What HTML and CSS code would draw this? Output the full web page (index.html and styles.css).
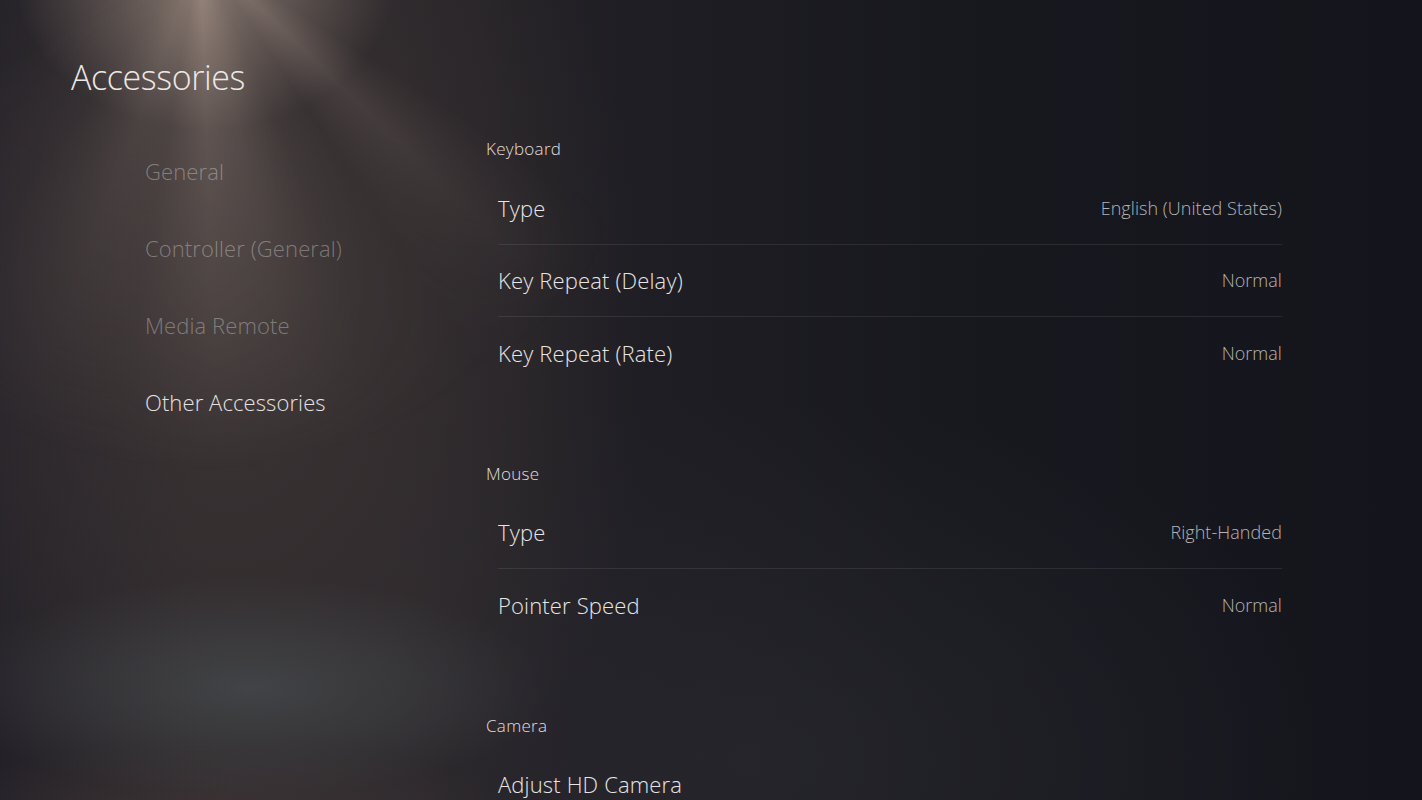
FILE: index.html
```html
<!DOCTYPE html>
<html lang="en">
<head>
<meta charset="utf-8">
<title>Accessories</title>
<link rel="stylesheet" href="styles.css">
</head>
<body>
<div class="screen">
  <div class="rays"></div>
  <aside class="sidebar">
    <h1 class="title">Accessories</h1>
    <nav class="nav">
      <div class="nav-item">General</div>
      <div class="nav-item">Controller (General)</div>
      <div class="nav-item">Media Remote</div>
      <div class="nav-item active">Other Accessories</div>
    </nav>
  </aside>
  <main class="content">
    <section class="group">
      <h2 class="group-title">Keyboard</h2>
      <div class="row"><span class="label">Type</span><span class="value">English (United States)</span></div>
      <div class="row"><span class="label">Key Repeat (Delay)</span><span class="value">Normal</span></div>
      <div class="row last"><span class="label">Key Repeat (Rate)</span><span class="value">Normal</span></div>
    </section>
    <section class="group">
      <h2 class="group-title">Mouse</h2>
      <div class="row"><span class="label">Type</span><span class="value">Right-Handed</span></div>
      <div class="row last"><span class="label">Pointer Speed</span><span class="value">Normal</span></div>
    </section>
    <section class="group">
      <h2 class="group-title">Camera</h2>
      <div class="row last"><span class="label">Adjust HD Camera</span><span class="value"></span></div>
    </section>
  </main>
</div>
</body>
</html>
```
FILE: styles.css
```css
html, body {
  margin: 0;
  padding: 0;
  height: 100%;
  overflow: hidden;
}
body {
  font-family: "Open Sans", "Noto Sans", sans-serif;
  font-weight: 300;
  color: #e6e4e4;
  background: #17181f;
}
.screen {
  position: relative;
  width: 1422px;
  height: 800px;
  display: flex;
  overflow: hidden;
  background:
    radial-gradient(ellipse 190px 150px at 205px -20px, rgba(175,155,142,0.65), rgba(175,155,142,0) 100%),
    radial-gradient(ellipse 300px 110px at 250px 688px, rgba(78,86,90,0.55), rgba(78,86,90,0) 100%),
    radial-gradient(ellipse 320px 90px at 220px 830px, rgba(78,64,64,0.5), rgba(78,64,64,0) 100%),
    radial-gradient(ellipse 420px 620px at 230px 330px, rgba(64,56,56,0.75), rgba(64,56,56,0) 100%),
    radial-gradient(ellipse 600px 360px at 750px 760px, rgba(44,43,50,0.6), rgba(44,43,50,0) 100%),
    linear-gradient(90deg, #211f26 0%, #2a2629 14%, #2a2629 28%, #1f1e24 44%, #18191f 65%, #14151c 100%);
}
.rays {
  position: absolute;
  left: 0;
  top: 0;
  width: 760px;
  height: 580px;
  pointer-events: none;
  background: conic-gradient(from 0deg at 200px -50px,
    rgba(150,132,122,0) 0deg 122deg,
    rgba(155,136,126,0.32) 134deg,
    rgba(150,132,122,0.08) 146deg,
    rgba(150,132,122,0.2) 156deg,
    rgba(165,146,134,0.45) 168deg,
    rgba(172,152,140,0.55) 178deg,
    rgba(160,140,130,0.35) 190deg,
    rgba(150,132,122,0.38) 200deg,
    rgba(150,132,122,0.12) 216deg,
    rgba(150,132,122,0) 242deg 360deg);
  -webkit-mask-image: radial-gradient(ellipse 500px 520px at 200px -50px, #000 0%, rgba(0,0,0,0.45) 55%, rgba(0,0,0,0) 100%);
  mask-image: radial-gradient(ellipse 500px 520px at 200px -50px, #000 0%, rgba(0,0,0,0.45) 55%, rgba(0,0,0,0) 100%);
}
.sidebar {
  position: relative;
  width: 486px;
  flex: 0 0 486px;
  padding-left: 71px;
  box-sizing: border-box;
}
.title {
  margin: 54px 0 0 0;
  font-size: 34px;
  line-height: 46px;
  font-weight: 300;
  color: #ebe8e6;
  letter-spacing: -0.4px;
}
.nav {
  margin-top: 56px;
  padding-left: 74px;
  display: flex;
  flex-direction: column;
}
.nav-item {
  font-size: 22px;
  line-height: 30px;
  height: 77px;
  color: rgba(255,255,255,0.32);
  letter-spacing: 0.1px;
}
.nav-item.active {
  color: #e4e2e2;
}
.content {
  position: relative;
  width: 796px;
  flex: 0 0 796px;
  padding-top: 137px;
  display: flex;
  flex-direction: column;
  gap: 72px;
}
.group-title {
  margin: 0 0 11px 0;
  font-size: 17px;
  line-height: 24px;
  font-weight: 300;
  color: #e0dedf;
  letter-spacing: 0.3px;
}
.row {
  margin-left: 12px;
  height: 71.5px;
  border-bottom: 1px solid rgba(255,255,255,0.085);
  display: flex;
  align-items: center;
  justify-content: space-between;
}
.row.last {
  border-bottom-color: transparent;
}
.label {
  font-size: 22px;
  color: #e8e6e6;
  letter-spacing: 0.15px;
}
.value {
  font-size: 18px;
  color: #b4b3b8;
  letter-spacing: 0.05px;
}
```
